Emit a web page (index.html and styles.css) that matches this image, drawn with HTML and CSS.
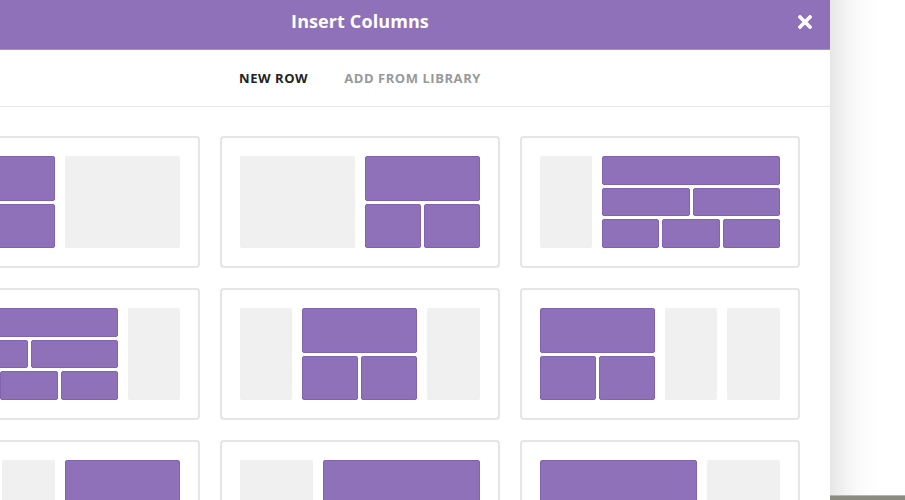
FILE: index.html
```html
<!DOCTYPE html>
<html>
<head>
<meta charset="utf-8">
<link rel="stylesheet" href="styles.css">
</head>
<body>
<div class="page">
  <div class="modal">
    <div class="header">
      <span class="title">Insert Columns</span>
      <span class="close">
        <svg width="14" height="14" viewBox="0 0 14 14"><path d="M2 2 L12 12 M12 2 L2 12" stroke="#fff" stroke-width="3.6" stroke-linecap="square"/></svg>
      </span>
    </div>
    <div class="tabs">
      <span class="tab active">New Row</span>
      <span class="tab">Add From Library</span>
    </div>
    <div class="grid">
      <!-- row 1 -->
      <div class="card">
        <div class="stack w115"><div class="line"><div class="p"></div></div><div class="line"><div class="p"></div></div></div>
        <div class="g w115"></div>
      </div>
      <div class="card">
        <div class="g w115"></div>
        <div class="stack w115"><div class="line"><div class="p"></div></div><div class="line"><div class="p"></div><div class="p"></div></div></div>
      </div>
      <div class="card">
        <div class="g w52"></div>
        <div class="stack grow"><div class="line"><div class="p"></div></div><div class="line"><div class="p"></div><div class="p"></div></div><div class="line"><div class="p"></div><div class="p"></div><div class="p"></div></div></div>
      </div>
      <!-- row 2 -->
      <div class="card">
        <div class="stack grow"><div class="line"><div class="p"></div></div><div class="line"><div class="p"></div><div class="p"></div></div><div class="line"><div class="p"></div><div class="p"></div><div class="p"></div></div></div>
        <div class="g w52"></div>
      </div>
      <div class="card">
        <div class="g w52"></div>
        <div class="stack w115"><div class="line"><div class="p"></div></div><div class="line"><div class="p"></div><div class="p"></div></div></div>
        <div class="g grow"></div>
      </div>
      <div class="card">
        <div class="stack w115"><div class="line"><div class="p"></div></div><div class="line"><div class="p"></div><div class="p"></div></div></div>
        <div class="g w52"></div>
        <div class="g grow"></div>
      </div>
      <!-- row 3 -->
      <div class="card">
        <div class="g w52"></div>
        <div class="g grow"></div>
        <div class="stack w115"><div class="line"><div class="p"></div></div></div>
      </div>
      <div class="card">
        <div class="g w73"></div>
        <div class="stack grow"><div class="line"><div class="p"></div></div></div>
      </div>
      <div class="card">
        <div class="stack w157"><div class="line"><div class="p"></div></div></div>
        <div class="g grow"></div>
      </div>
    </div>
  </div>
  <div class="backdrop">
    <div class="bar"></div>
  </div>
</div>
</body>
</html>
```
FILE: styles.css
```css
html, body {
  margin: 0;
  padding: 0;
  background: #fff;
  overflow: hidden;
}
body {
  width: 905px;
  height: 500px;
  font-family: "Open Sans", "Liberation Sans", sans-serif;
}
.page {
  display: flex;
  width: 905px;
  height: 500px;
  overflow: hidden;
}
.modal {
  flex: 0 0 940px;
  width: 940px;
  margin-left: -110px;
  background: #fff;
  height: 500px;
  overflow: hidden;
}
.header {
  position: relative;
  height: 49px;
  background: #8e71b9;
  border-bottom: 1px solid #a58ecb;
  display: flex;
  justify-content: center;
  align-items: center;
}
.title {
  color: #fff;
  font-size: 18px;
  font-weight: 700;
  line-height: 42px;
  margin-top: -7px;
  letter-spacing: 0.1px;
}
.close {
  position: absolute;
  right: 18px;
  top: 15px;
  width: 14px;
  height: 14px;
  display: flex;
}
.tabs {
  height: 55px;
  border-bottom: 1px solid #e6e6e6;
  display: flex;
  justify-content: center;
  align-items: center;
  gap: 36px;
  padding-bottom: 1px;
  box-sizing: content-box;
}
.tab {
  font-size: 13px;
  font-weight: 700;
  text-transform: uppercase;
  letter-spacing: 0.55px;
  color: #999;
  padding-top: 1px;
}
.tab.active {
  color: #222;
}
.grid {
  display: grid;
  grid-template-columns: repeat(3, 280px);
  column-gap: 20px;
  row-gap: 20px;
  padding: 29px 30px 0;
}
.card {
  box-sizing: border-box;
  width: 280px;
  height: 132px;
  border: 2px solid #e5e5e5;
  border-radius: 4px;
  padding: 18px;
  display: flex;
  gap: 10px;
}
.g {
  background: #f0f0f0;
  border-radius: 2px;
}
.w52 { flex: 0 0 52px; }
.w73 { flex: 0 0 73px; }
.w115 { flex: 0 0 115px; }
.w157 { flex: 0 0 157px; }
.grow { flex: 1 1 auto; }
.stack {
  display: flex;
  flex-direction: column;
  gap: 3px;
}
.line {
  flex: 1;
  display: flex;
  gap: 3px;
}
.p {
  flex: 1;
  box-sizing: border-box;
  background: #8e71b9;
  border: 1px solid #8064b0;
  border-radius: 2px;
}
.backdrop {
  flex: 1;
  display: flex;
  flex-direction: column;
  justify-content: flex-end;
  background: linear-gradient(to right, #e6e6e6 0px, #f3f3f3 15px, #fbfbfb 30px, #ffffff 50px);
}
.bar {
  height: 4px;
  background: #8b8b82;
  border-top: 1px solid #b5b5ac;
}
```
